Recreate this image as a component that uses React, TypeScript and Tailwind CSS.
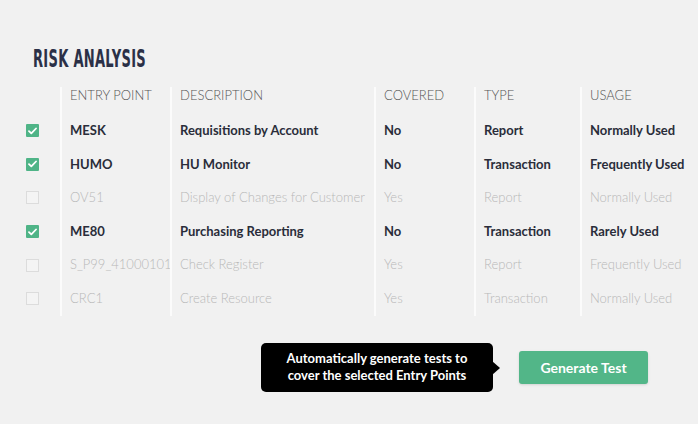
const rows = [
  { on: true, code: "MESK", desc: "Requisitions by Account", covered: "No", type: "Report", usage: "Normally Used" },
  { on: true, code: "HUMO", desc: "HU Monitor", covered: "No", type: "Transaction", usage: "Frequently Used" },
  { on: false, code: "OV51", desc: "Display of Changes for Customer", covered: "Yes", type: "Report", usage: "Normally Used" },
  { on: true, code: "ME80", desc: "Purchasing Reporting", covered: "No", type: "Transaction", usage: "Rarely Used" },
  { on: false, code: "S_P99_41000101", desc: "Check Register", covered: "Yes", type: "Report", usage: "Frequently Used" },
  { on: false, code: "CRC1", desc: "Create Resource", covered: "Yes", type: "Transaction", usage: "Normally Used" },
];

const cols = "grid grid-cols-[60px_110px_204px_100px_106px_1fr]";
const cell = "border-l-2 border-[#fbfbfb] pl-2 flex items-center";
const head = "border-l-2 border-[#fbfbfb] pl-2 mt-[9px] h-[27px] leading-[16px]";

function Check({ on }: { on: boolean }) {
  if (!on) {
    return <div className="ml-[26px] w-[13px] h-[13px] border border-[#dcdcdc] bg-[#f4f4f4]" />;
  }
  return (
    <div className="ml-[26px] w-[13px] h-[13px] bg-[#4fb487] rounded-[1px] flex items-center justify-center">
      <svg width="9" height="8" viewBox="0 0 9 8" fill="none">
        <path d="M1 4.2l2.3 2.2L8 1.5" stroke="white" strokeWidth="1.8" strokeLinecap="round" strokeLinejoin="round" />
      </svg>
    </div>
  );
}

export default function App() {
  return (
    <div className="w-[698px] h-[424px] bg-[#f1f1f1] overflow-hidden font-['Lato','Liberation_Sans',sans-serif] text-[13px]">
      <div className="h-[78px] pt-[44px] pl-[33px]">
        <h1 className="inline-block font-['DejaVu_Sans_Condensed','DejaVu_Sans',sans-serif] font-bold text-[25px] leading-[30px] text-[#2b3047] tracking-[0.5px] scale-x-[0.58] origin-left whitespace-nowrap">
          RISK ANALYSIS
        </h1>
      </div>
      <div>
        <div className={`${cols} h-[36px] text-[#555] font-light`}>
          <div />
          <div className={head}>ENTRY POINT</div>
          <div className={head}>DESCRIPTION</div>
          <div className={head}>COVERED</div>
          <div className={head}>TYPE</div>
          <div className={head}>USAGE</div>
        </div>
        {rows.map((r) => (
          <div
            key={r.code}
            className={`${cols} h-[33.6px] ${r.on ? "text-[#2a2d3a] font-bold" : "text-[#b8b8b8] font-light"}`}
          >
            <div className="flex items-center">
              <Check on={r.on} />
            </div>
            <div className={cell}>{r.code}</div>
            <div className={cell}>{r.desc}</div>
            <div className={cell}>{r.covered}</div>
            <div className={cell}>{r.type}</div>
            <div className={cell}>{r.usage}</div>
          </div>
        ))}
      </div>
      <div className="mt-[27px] flex items-center">
        <div className="ml-[261px] relative w-[232px] h-[49px] bg-black rounded-[5px] flex items-center justify-center text-center text-white font-bold text-[13px] leading-[17px]">
          Automatically generate tests to
          <br />
          cover the selected Entry Points
          <div className="absolute right-[-7px] top-[18px] w-0 h-0 border-y-[7px] border-y-transparent border-l-[8px] border-l-black" />
        </div>
        <button className="ml-[26px] w-[129px] h-[33px] bg-[#52b688] rounded-[3px] shadow-sm text-white font-bold text-[14px]">
          Generate Test
        </button>
      </div>
    </div>
  );
}
